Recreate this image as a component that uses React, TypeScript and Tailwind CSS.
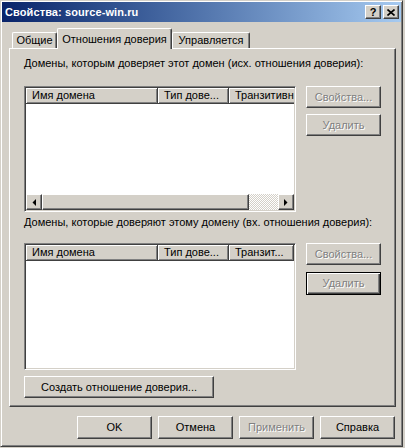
import React from "react";

const FONT = "font-['Liberation_Sans',Arial,sans-serif]";

const raised =
  "border border-t-white border-l-white border-r-[#404040] border-b-[#404040] shadow-[inset_-1px_-1px_#808080]";
const sunken =
  "border border-t-[#808080] border-l-[#808080] border-r-white border-b-white shadow-[inset_1px_1px_#404040,inset_-1px_-1px_#d4d0c8]";
const disabledText = "text-[#808080] [text-shadow:1px_1px_#fff]";

type BtnProps = {
  label: string;
  disabled?: boolean;
  isDefault?: boolean;
  className?: string;
};

const Button = ({ label, disabled, isDefault, className = "" }: BtnProps) => (
  <div
    className={`flex items-center justify-center bg-[#d4d0c8] text-[11px] ${
      isDefault
        ? "border border-black shadow-[inset_1px_1px_#fff,inset_-1px_-1px_#404040,inset_-2px_-2px_#808080]"
        : raised
    } ${disabled ? disabledText : "text-black"} ${className}`}
  >
    {label}
  </div>
);

const Arrow = ({ dir }: { dir: "left" | "right" }) => (
  <div className={`w-[16px] h-[16px] bg-[#d4d0c8] ${raised} flex items-center justify-center`}>
    <svg width="4" height="7" viewBox="0 0 4 7">
      {dir === "left" ? (
        <path d="M4 0 L4 7 L0.5 3.5 Z" fill="#000" />
      ) : (
        <path d="M0 0 L0 7 L3.5 3.5 Z" fill="#000" />
      )}
    </svg>
  </div>
);

const Header = ({ cols }: { cols: { label: string; w: string }[] }) => (
  <div className="flex h-[16px] shrink-0 overflow-hidden">
    {cols.map((c) => (
      <div
        key={c.label}
        className={`${c.w} shrink-0 h-full bg-[#d4d0c8] border-r border-b border-[#404040] shadow-[inset_1px_1px_#fff,inset_-1px_-1px_#808080] px-[6px] text-[11px] leading-[14px] whitespace-nowrap overflow-hidden`}
      >
        {c.label}
      </div>
    ))}
  </div>
);

const Tab = ({ label, active, w }: { label: string; active?: boolean; w: string }) => (
  <div
    className={`${w} flex items-center justify-center bg-[#d4d0c8] border-t border-l border-white border-r border-r-[#404040] shadow-[inset_-1px_0_#808080] rounded-t-[2px] text-[11px] ${
      active ? "h-[21px] -mb-px relative z-10" : "h-[16px]"
    }`}
  >
    {label}
  </div>
);

export default function App() {
  return (
    <div className={`w-[405px] h-[448px] bg-[#d4d0c8] ${FONT}`}>
      <div className="w-[403px] h-[447px] border border-t-[#d4d0c8] border-l-[#d4d0c8] border-r-[#404040] border-b-[#404040] shadow-[inset_1px_1px_#fff,inset_-1px_-1px_#808080] p-px flex flex-col">
        {/* title bar */}
        <div className="h-[20px] shrink-0 flex items-center justify-between pl-[3px] pr-[2px] bg-gradient-to-r from-[#0a246a] to-[#a6caf0]">
          <span className="text-white font-bold text-[11px] tracking-[0.1px]">
            Свойства: source-win.ru
          </span>
          <div className="flex gap-[2px]">
            <div className={`w-[16px] h-[14px] bg-[#d4d0c8] ${raised} flex items-center justify-center text-[11px] font-bold leading-none`}>
              ?
            </div>
            <div className={`w-[16px] h-[14px] bg-[#d4d0c8] ${raised} flex items-center justify-center`}>
              <svg width="8" height="7" viewBox="0 0 8 7">
                <path d="M0.5 0.5 L7.5 6.5 M7.5 0.5 L0.5 6.5" stroke="#000" strokeWidth="1.6" />
              </svg>
            </div>
          </div>
        </div>

        {/* tabs */}
        <div className="mt-[6px] h-[20px] flex items-end pl-[10px] shrink-0">
          <Tab label="Общие" w="w-[45px]" />
          <Tab label="Отношения доверия" w="w-[115px]" active />
          <Tab label="Управляется" w="w-[78px]" />
        </div>

        {/* panel */}
        <div className="ml-[7px] w-[387px] h-[359px] shrink-0 border border-t-white border-l-white border-r-[#404040] border-b-[#404040] shadow-[inset_-1px_-1px_#808080] pl-[14px] flex flex-col text-[11px]">
          <div className="mt-[7px] h-[14px] leading-[14px] whitespace-nowrap">
            Домены, которым доверяет этот домен (исх. отношения доверия):
          </div>
          <div className="mt-[16px] flex">
            <div className={`w-[272px] h-[126px] bg-white ${sunken} p-px flex flex-col`}>
              <Header
                cols={[
                  { label: "Имя домена", w: "w-[132px]" },
                  { label: "Тип дове...", w: "w-[71px]" },
                  { label: "Транзитивн", w: "w-[100px]" },
                ]}
              />
              <div className="flex-1" />
              <div className="flex h-[16px] shrink-0">
                <Arrow dir="left" />
                <div className={`w-[207px] h-[16px] bg-[#d4d0c8] ${raised}`} />
                <div className="w-[29px] h-[16px] bg-[image:repeating-conic-gradient(#fff_0%_25%,#d4d0c8_0%_50%)] bg-[length:2px_2px]" />
                <Arrow dir="right" />
              </div>
            </div>
            <div className="ml-[10px] flex flex-col gap-[6px]">
              <Button label="Свойства..." disabled className="w-[75px] h-[22px]" />
              <Button label="Удалить" disabled className="w-[75px] h-[22px]" />
            </div>
          </div>
          <div className="mt-[3px] h-[14px] leading-[14px] whitespace-nowrap">
            Домены, которые доверяют этому домену (вх. отношения доверия):
          </div>
          <div className="mt-[14px] flex">
            <div className={`w-[272px] h-[127px] bg-white ${sunken} p-px flex flex-col`}>
              <Header
                cols={[
                  { label: "Имя домена", w: "w-[132px]" },
                  { label: "Тип дове...", w: "w-[71px]" },
                  { label: "Транзит...", w: "w-[65px]" },
                ]}
              />
            </div>
            <div className="ml-[10px] flex flex-col gap-[7px]">
              <Button label="Свойства..." disabled className="w-[75px] h-[22px]" />
              <Button label="Удалить" disabled isDefault className="w-[75px] h-[23px]" />
            </div>
          </div>
          <Button label="Создать отношение доверия..." className="mt-[6px] w-[190px] h-[22px]" />
        </div>

        {/* bottom buttons */}
        <div className="mt-[9px] flex justify-end gap-[6px] pr-[6px]">
          <Button label="OK" className="w-[75px] h-[23px]" />
          <Button label="Отмена" className="w-[75px] h-[23px]" />
          <Button label="Применить" disabled className="w-[75px] h-[23px]" />
          <Button label="Справка" className="w-[75px] h-[23px]" />
        </div>
      </div>
    </div>
  );
}
